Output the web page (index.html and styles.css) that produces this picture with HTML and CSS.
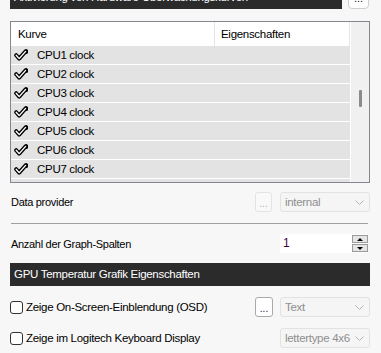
FILE: index.html
```html
<!DOCTYPE html>
<html lang="de">
<head>
  <meta charset="UTF-8">
  <meta name="viewport" content="width=device-width, initial-scale=1.0">
  <title>Überwachung</title>
  <link rel="stylesheet" href="styles.css">
</head>
<body>
  <div class="panel">
    <!-- Kopfzeile Überwachungskurven -->
    <div class="section-head top">
      <div class="bar">Aktivierung von Hardware-Überwachungskurven</div>
      <button class="dots-btn">...</button>
    </div>

    <!-- Liste der Kurven -->
    <div class="list">
      <div class="grid">
        <div class="grid-head">
          <div class="col-curve">Kurve</div>
          <div class="col-props">Eigenschaften</div>
        </div>
        <div class="rows" id="rows"></div>
      </div>
      <div class="vscroll"><div class="thumb"></div></div>
    </div>

    <div class="field-row">
      <div class="label">Data provider</div>
      <button class="small-btn" disabled>...</button>
      <div class="combo">internal<svg width="9" height="5" viewBox="0 0 9 5"><polyline points="0.5,0.5 4.5,4.5 8.5,0.5" fill="none" stroke="#b4b4b4" stroke-width="1"/></svg></div>
    </div>

    <hr class="sep">

    <div class="field-row spin-row">
      <div class="label">Anzahl der Graph-Spalten</div>
      <div class="spin">
        <div class="spin-value">1</div>
        <div class="spin-btns">
          <div class="spin-btn"><span class="arrow-up"></span></div>
          <div class="spin-btn"><span class="arrow-down"></span></div>
        </div>
      </div>
    </div>

    <div class="section-head gpu">
      <div class="bar">GPU Temperatur Grafik Eigenschaften</div>
    </div>

    <div class="field-row check-row">
      <label class="label"><input type="checkbox"> Zeige On-Screen-Einblendung (OSD)</label>
      <button class="small-btn active">...</button>
      <div class="combo">Text<svg width="9" height="5" viewBox="0 0 9 5"><polyline points="0.5,0.5 4.5,4.5 8.5,0.5" fill="none" stroke="#b4b4b4" stroke-width="1"/></svg></div>
    </div>

    <div class="field-row check-row second">
      <label class="label"><input type="checkbox"> Zeige im Logitech Keyboard Display</label>
      <div class="combo">lettertype 4x6<svg width="9" height="5" viewBox="0 0 9 5"><polyline points="0.5,0.5 4.5,4.5 8.5,0.5" fill="none" stroke="#b4b4b4" stroke-width="1"/></svg></div>
    </div>
  </div>

  <script>
    const rows = document.getElementById("rows");
    const check = '<svg class="check" width="14" height="12" viewBox="0 0 14 12">' +
      '<path d="M2.2,6.2 L5.2,9.6 L11.6,2.4 Q12.4,1.6 12.2,3" fill="none" stroke="#000" stroke-width="4" stroke-linecap="round" stroke-linejoin="round"/>' +
      '<path d="M2.2,6.2 L5.2,9.6 L11.6,2.4" fill="none" stroke="#fff" stroke-width="1.4" stroke-linecap="round" stroke-linejoin="round"/></svg>';

    for (let i = 1; i <= 8; i++) {
      const row = document.createElement("div");
      row.className = "row";
      row.innerHTML = check + '<span class="name">CPU' + i + ' clock</span>';
      rows.appendChild(row);
    }
  </script>
</body>
</html>
```

FILE: styles.css
```css
/* Stile generale */
body {
  margin: 0;
  background-color: #f7f7f7;
  font-family: "Liberation Sans", Arial, sans-serif;
  font-size: 11px;
  letter-spacing: -0.3px;
  color: #000;
  overflow: hidden;
}

.panel {
  width: 360px;
  margin-left: 10px;
}

/* Barre scure */
.section-head {
  display: flex;
}

.section-head.top {
  margin-top: -14px;
}

.bar {
  flex: 1;
  height: 23px;
  background-color: #2b2b2b;
  color: #fff;
  font-size: 11.5px;
  line-height: 23px;
  padding-left: 4px;
}

.dots-btn {
  width: 21px;
  height: 23px;
  margin-left: 6px;
  margin-right: 1px;
  padding: 0;
  background-color: #fff;
  border: 1px solid #cfcfcf;
  border-radius: 4px;
  font-family: inherit;
  font-size: 11px;
  color: #202040;
}

/* Lista */
.list {
  display: flex;
  height: 160px;
  margin-top: 12px;
  border: 1px solid #828790;
  background-color: #fff;
  overflow: hidden;
}

.grid {
  width: 340px;
}

.grid-head {
  display: flex;
  height: 24px;
  line-height: 24px;
  font-size: 11.5px;
}

.col-curve {
  width: 196px;
  padding-left: 7px;
  border-right: 1px solid #e5e5e5;
}

.col-props {
  flex: 1;
  padding-left: 6px;
  margin-right: 1px;
  border-right: 1px solid #e5e5e5;
}

.row {
  display: flex;
  align-items: center;
  height: 18px;
  margin-bottom: 1px;
  margin-right: 1px;
  background-color: #e3e3e3;
  font-size: 11.5px;
}

.check {
  margin-left: 3px;
  margin-right: 9px;
}

.vscroll {
  width: 18px;
  background-color: #f0f0f0;
}

.thumb {
  width: 3px;
  height: 17px;
  margin-top: 68px;
  margin-left: 8px;
  border-radius: 1px;
  background-color: #8a8a8a;
}

/* Campi */
.field-row {
  display: flex;
  align-items: center;
  height: 20px;
  margin-top: 9px;
}

.label {
  flex: 1;
  padding-left: 1px;
  display: flex;
  align-items: center;
}

.small-btn {
  width: 17px;
  height: 20px;
  padding: 0;
  margin-right: 8px;
  background-color: #f9f9f9;
  border: 1px solid #e3e3e3;
  border-radius: 3px;
  font-family: inherit;
  font-size: 10px;
  line-height: 22px;
  color: #b0b0b0;
}

.small-btn.active {
  width: 18px;
  margin-right: 7px;
  background-color: #fff;
  border-color: #a9a9a9;
  color: #202040;
}

.combo {
  display: flex;
  align-items: center;
  justify-content: space-between;
  width: 90px;
  height: 20px;
  box-sizing: border-box;
  padding: 0 5px 0 4px;
  background-color: #f5f5f5;
  border: 1px solid #e2e2e2;
  border-radius: 3px;
  color: #8e8e8e;
  font-size: 11.5px;
}

.sep {
  margin: 11px 2px 0 1px;
  border: none;
  border-top: 1px solid #a0a0a0;
}

/* Spin */
.spin-row {
  height: 19px;
  margin-top: 10px;
}

.spin {
  display: flex;
  width: 88px;
  height: 19px;
  margin-right: 2px;
  background-color: #fff;
}

.spin-value {
  flex: 1;
  padding-left: 3px;
  line-height: 19px;
  font-size: 12px;
  color: #400040;
}

.spin-btns {
  display: flex;
  flex-direction: column;
  justify-content: center;
  gap: 1px;
  width: 16px;
}

.spin-btn {
  display: flex;
  align-items: center;
  justify-content: center;
  height: 8px;
  background-color: #e6e6e6;
  border: 1px solid #9a9a9a;
  box-sizing: border-box;
}

.arrow-up {
  border-left: 3px solid transparent;
  border-right: 3px solid transparent;
  border-bottom: 3px solid #000;
}

.arrow-down {
  border-left: 3px solid transparent;
  border-right: 3px solid transparent;
  border-top: 3px solid #000;
}

.section-head.gpu {
  margin-top: 10px;
}

/* Checkbox */
.check-row {
  margin-top: 11px;
}

.check-row .label {
  padding-left: 0;
  font-size: 11.5px;
}

.check-row input[type="checkbox"] {
  appearance: none;
  width: 13px;
  height: 13px;
  margin: 0 3px 0 0;
  border: 1px solid #333;
  border-radius: 3px;
  background-color: #fff;
}

.check-row.second {
  margin-top: 11px;
}
```
